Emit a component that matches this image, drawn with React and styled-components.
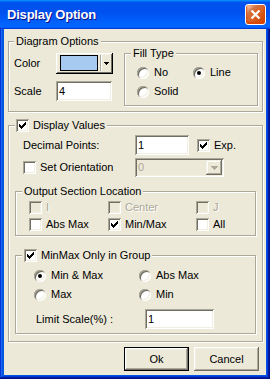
import React from 'react';
import styled, { createGlobalStyle } from 'styled-components';

const GlobalStyle = createGlobalStyle`
  html, body { margin: 0; padding: 0; background: #fff; }
  body {
    font-family: "Liberation Sans", Arial, sans-serif;
    font-size: 11px;
    color: #000;
  }
  * { box-sizing: border-box; }
`;

const Window = styled.div`
  width: 270px;
  height: 379px;
  display: flex;
  flex-direction: column;
  background: #0055e5;
  box-shadow: inset -1px -1px #00138c, inset 1px 1px #0831d9, inset -2px -2px #001ea0,
    inset 2px 2px #166aee, inset -3px -3px #003bda, inset 3px 3px #0855dd;
`;

const TitleBar = styled.div`
  height: 29px;
  flex: none;
  display: flex;
  align-items: center;
  justify-content: space-between;
  padding: 0 4px 0 7px;
  background: linear-gradient(180deg, #0997ff, #0053ee 8%, #0050ee 40%, #0066ff 88%, #0066ff 93%, #005bff 95%, #003dd7 96%, #003dd7);
`;

const Title = styled.span`
  font-family: "Liberation Sans", Arial, sans-serif;
  font-weight: bold;
  font-size: 13px;
  color: #fff;
  letter-spacing: -0.2px;
  text-shadow: 1px 1px #0f1089;
`;

const CloseButton = styled.div`
  width: 21px;
  height: 21px;
  display: flex;
  align-items: center;
  justify-content: center;
  border: 1px solid #fff;
  border-radius: 3px;
  background: radial-gradient(circle at 90% 90%, #cc4600 0, #dc6527 55%, #cd7546 70%, #ffccb2 90%, #fff 100%);
  box-shadow: inset 0 -1px 2px 1px #da4600;
`;

const Client = styled.div`
  flex: 1;
  margin: 0 4px 4px;
  background: #ece9d8;
  padding: 6px 3px 0 4px;
  display: flex;
  flex-direction: column;
`;

const GroupBox = styled.fieldset`
  margin: ${p => p.$mt || 0}px 0 0;
  padding: ${p => p.$pad};
  min-width: 0;
  border: 1px solid #aca899;
  box-shadow: 1px 1px 0 #fff, inset 1px 1px 0 #fff;
`;

const Legend = styled.legend`
  display: flex;
  align-items: center;
  gap: 4px;
  height: 13px;
  line-height: 13px;
  padding: 0 2px 0 ${p => (p.$pl != null ? p.$pl : 2)}px;
  background: #ece9d8;
  white-space: nowrap;
`;

const DiagramBody = styled.div`
  display: grid;
  grid-template-columns: 110px 134px;
  align-items: start;
`;

const FieldGrid = styled.div`
  display: grid;
  grid-template-columns: ${p => p.$cols};
  row-gap: ${p => p.$gap || 0}px;
  align-items: center;
  padding: ${p => p.$pt || 0}px 0 0 ${p => p.$pl || 0}px;
  margin-top: ${p => p.$mt || 0}px;
`;

const Label = styled.span`
  line-height: 13px;
  white-space: nowrap;
`;

const Sunken = styled.div`
  width: ${p => p.$w}px;
  height: ${p => p.$h || 20}px;
  display: flex;
  align-items: center;
  padding: 0 2px 0 3px;
  background: ${p => (p.$disabled ? '#ece9d8' : '#fff')};
  color: ${p => (p.$disabled ? '#aca899' : '#000')};
  box-shadow: inset 1px 1px #aca899, inset -1px -1px #fff, inset 2px 2px #716f64, inset -2px -2px #f1efe2;
`;

const EditText = styled.span`
  flex: 1;
  line-height: 13px;
`;

const ArrowButton = styled.div`
  width: ${p => p.$w}px;
  align-self: stretch;
  margin: 2px 0;
  display: flex;
  align-items: center;
  justify-content: center;
  background: #ece9d8;
  box-shadow: inset -1px -1px #716f64, inset 1px 1px #f1efe2, inset -2px -2px #aca899, inset 2px 2px #fff;
`;

const ColorCombo = styled.div`
  width: 57px;
  height: 21px;
  display: flex;
  align-items: stretch;
  padding: 2px 2px 3px 4px;
  background: #ece9d8;
  box-shadow: inset -1px -1px #000, inset 1px 1px #fff, inset -2px -2px #716f64, inset 2px 2px #f1efe2;
`;

const Swatch = styled.div`
  width: 38px;
  border: 1px solid #000;
  background: ${p => p.$color};
`;

const ComboArrow = styled.div`
  flex: 1;
  margin-left: 2px;
  display: flex;
  align-items: center;
  justify-content: center;
  border-left: 1px solid #aca899;
  box-shadow: inset 1px 0 #fff;
`;

const OptionRow = styled.label`
  display: flex;
  align-items: center;
  gap: ${p => p.$gap || 4}px;
  line-height: 13px;
  white-space: nowrap;
  color: ${p => (p.$disabled ? '#aca899' : '#000')};
  text-shadow: ${p => (p.$disabled ? '1px 1px #fff' : 'none')};
`;

const CheckBox = styled.span`
  width: 13px;
  height: 13px;
  flex: none;
  display: inline-flex;
  align-items: center;
  justify-content: center;
  background: ${p => (p.$disabled ? '#ece9d8' : '#fff')};
  box-shadow: inset 1px 1px #aca899, inset -1px -1px #fff, inset 2px 2px #716f64, inset -2px -2px #f1efe2;
`;

const RadioDot = styled.span`
  width: 12px;
  height: 12px;
  flex: none;
  border-radius: 50%;
  display: inline-flex;
  align-items: center;
  justify-content: center;
  background: #fff;
  box-shadow: inset 1px 1px #aca899, inset -1px -1px #fff, inset 2px 2px #716f64, inset -2px -2px #f1efe2;

  &::after {
    content: '';
    width: 4px;
    height: 4px;
    border-radius: 50%;
    background: ${p => (p.$checked ? '#000' : 'transparent')};
  }
`;

const ButtonRow = styled.div`
  display: flex;
  justify-content: flex-end;
  gap: 5px;
  margin-top: 5px;
  padding-right: 4px;
`;

const PushButton = styled.div`
  width: 65px;
  height: 24px;
  display: flex;
  align-items: center;
  justify-content: center;
  background: #ece9d8;
  border: ${p => (p.$default ? '1px solid #000' : 'none')};
  box-shadow: inset -1px -1px #716f64, inset 1px 1px #fff, inset -2px -2px #aca899, inset 2px 2px #f1efe2;
`;

const CheckMark = () => (
  <svg width="7" height="7" viewBox="0 0 7 7">
    {[2, 3, 4, 3, 2, 1, 0].map((y, x) => (
      <rect key={x} x={x} y={y} width="1" height="3" fill="#000" />
    ))}
  </svg>
);

const ArrowDown = ({ size, color }) => (
  <svg width={size * 2 - 1} height={size} viewBox={`0 0 ${size * 2 - 1} ${size}`}>
    {Array.from({ length: size }).map((_, i) => (
      <rect key={i} x={i} y={i} width={size * 2 - 1 - i * 2} height="1" fill={color} />
    ))}
  </svg>
);

const Check = ({ checked, disabled }) => (
  <CheckBox $disabled={disabled}>{checked && <CheckMark />}</CheckBox>
);

const CheckOption = ({ checked, disabled, children }) => (
  <OptionRow $disabled={disabled}>
    <Check checked={checked} disabled={disabled} />
    {children}
  </OptionRow>
);

const RadioOption = ({ checked, children }) => (
  <OptionRow $gap={5}>
    <RadioDot $checked={checked} />
    {children}
  </OptionRow>
);

const ExpCell = styled.div`
  display: flex;
  align-items: center;
  gap: 8px;
`;

export default function App() {
  return (
    <>
      <GlobalStyle />
      <Window>
        <TitleBar>
          <Title>Display Option</Title>
          <CloseButton>
            <svg width="11" height="11" viewBox="0 0 11 11">
              <path d="M1.5 1.5 L9.5 9.5 M9.5 1.5 L1.5 9.5" stroke="#fff" strokeWidth="2.2" />
            </svg>
          </CloseButton>
        </TitleBar>

        <Client>
          <GroupBox $pad="0 4px 5px 5px">
            <Legend>Diagram Options</Legend>
            <DiagramBody>
              <FieldGrid $cols="42px auto" $gap={7} $pt={5}>
                <Label>Color</Label>
                <ColorCombo>
                  <Swatch $color="#a6caf0" />
                  <ComboArrow>
                    <ArrowDown size={3} color="#000" />
                  </ComboArrow>
                </ColorCombo>
                <Label>Scale</Label>
                <Sunken $w={56}>
                  <EditText>4</EditText>
                </Sunken>
              </FieldGrid>

              <GroupBox $pad="0 6px 7px 6px" $mt={-1}>
                <Legend>Fill Type</Legend>
                <FieldGrid $cols="56px auto" $gap={6} $pt={6} $pl={6}>
                  <RadioOption>No</RadioOption>
                  <RadioOption checked>Line</RadioOption>
                  <RadioOption>Solid</RadioOption>
                </FieldGrid>
              </GroupBox>
            </DiagramBody>
          </GroupBox>

          <GroupBox $mt={7} $pad="0 6px 7px 6px">
            <Legend $pl={1}>
              <Check checked />
              Display Values
            </Legend>

            <FieldGrid $cols="112px auto" $gap={3} $pt={3} $pl={8}>
              <Label>Decimal Points:</Label>
              <ExpCell>
                <Sunken $w={54}>
                  <EditText>1</EditText>
                </Sunken>
                <CheckOption checked>Exp.</CheckOption>
              </ExpCell>
              <CheckOption>Set Orientation</CheckOption>
              <Sunken $w={89} $h={19} $disabled>
                <EditText>0</EditText>
                <ArrowButton $w={16}>
                  <ArrowDown size={4} color="#aca899" />
                </ArrowButton>
              </Sunken>
            </FieldGrid>

            <GroupBox $mt={8} $pad="0 6px 4px 6px">
              <Legend>Output Section Location</Legend>
              <FieldGrid $cols="79px 88px auto" $gap={4} $pt={3} $pl={7}>
                <CheckOption disabled>I</CheckOption>
                <CheckOption disabled>Center</CheckOption>
                <CheckOption disabled>J</CheckOption>
                <CheckOption>Abs Max</CheckOption>
                <CheckOption checked>Min/Max</CheckOption>
                <CheckOption>All</CheckOption>
              </FieldGrid>
            </GroupBox>

            <GroupBox $mt={13} $pad="0 6px 4px 6px">
              <Legend>
                <Check checked />
                MinMax Only in Group
              </Legend>
              <FieldGrid $cols="105px auto" $gap={6} $pt={7} $pl={12}>
                <RadioOption checked>Min &amp; Max</RadioOption>
                <RadioOption>Abs Max</RadioOption>
                <RadioOption>Max</RadioOption>
                <RadioOption>Min</RadioOption>
              </FieldGrid>
              <FieldGrid $cols="109px auto" $mt={8} $pl={14}>
                <Label>Limit Scale(%) :</Label>
                <Sunken $w={69}>
                  <EditText>1</EditText>
                </Sunken>
              </FieldGrid>
            </GroupBox>
          </GroupBox>

          <ButtonRow>
            <PushButton $default>Ok</PushButton>
            <PushButton>Cancel</PushButton>
          </ButtonRow>
        </Client>
      </Window>
    </>
  );
}
